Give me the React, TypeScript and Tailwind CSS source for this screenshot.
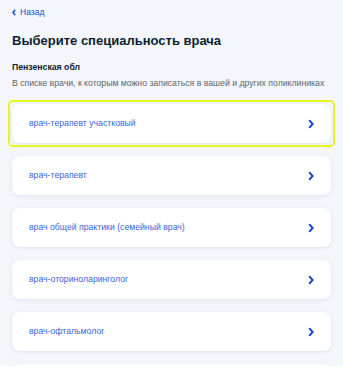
import React from 'react';

const specialties = [
  'врач-терапевт участковый',
  'врач-терапевт',
  'врач общей практики (семейный врач)',
  'врач-оториноларинголог',
  'врач-офтальмолог',
];

export default function App() {
  return (
    <div className="w-[343px] h-[375px] overflow-hidden bg-white font-['Liberation_Sans',Arial,sans-serif]">
      <div className="h-[366px] overflow-hidden bg-[#f4f6fb] px-3 pt-[5px]">
        {/* Back link */}
        <button className="flex items-center gap-[4px] text-[8.5px] text-[#0d4cd3] leading-[14px]">
          <svg width="4" height="7" viewBox="0 0 4 7" fill="none">
            <path d="M3.2 0.8L0.9 3.5l2.3 2.7" stroke="currentColor" strokeWidth="1.4" />
          </svg>
          Назад
        </button>

        {/* Title */}
        <h1 className="mt-[13px] text-[13px] leading-[18px] font-bold text-[#0b1f33]">
          Выберите специальность врача
        </h1>

        <p className="mt-[10px] text-[8.7px] leading-[14px] font-bold text-[#0b1f33]">Пензенская обл</p>
        <p className="mt-[2px] text-[8.7px] leading-[14px] text-[#5b6670] whitespace-nowrap">
          В списке врачи, к которым можно записаться в вашей и других поликлиниках
        </p>

        {/* List */}
        <div className="mt-[14px] flex flex-col gap-[13px]">
          {specialties.map((name, i) => (
            <div
              key={name}
              className={
                i === 0
                  ? 'rounded-[3px] outline-2 outline-[#e6f51f] -mx-[2px] px-[2px] py-[2px] -my-[2px]'
                  : ''
              }
            >
              <button className="w-full h-[39px] flex items-center justify-between pl-[17px] pr-[17px] bg-white rounded-[8px] shadow-[0_1px_4px_rgba(176,196,222,0.35)]">
                <span className="text-[8.7px] text-[#3965dd]">{name}</span>
                <svg width="6" height="10" viewBox="0 0 6 10" fill="none" className="text-[#0d4cd3]">
                  <path d="M1.2 1.2L4.6 5L1.2 8.8" stroke="currentColor" strokeWidth="2" />
                </svg>
              </button>
            </div>
          ))}
          {/* next card, cut off by the viewport */}
          <div className="h-[39px] bg-white rounded-[8px] shadow-[0_1px_4px_rgba(176,196,222,0.35)]" />
        </div>
      </div>
    </div>
  );
}
